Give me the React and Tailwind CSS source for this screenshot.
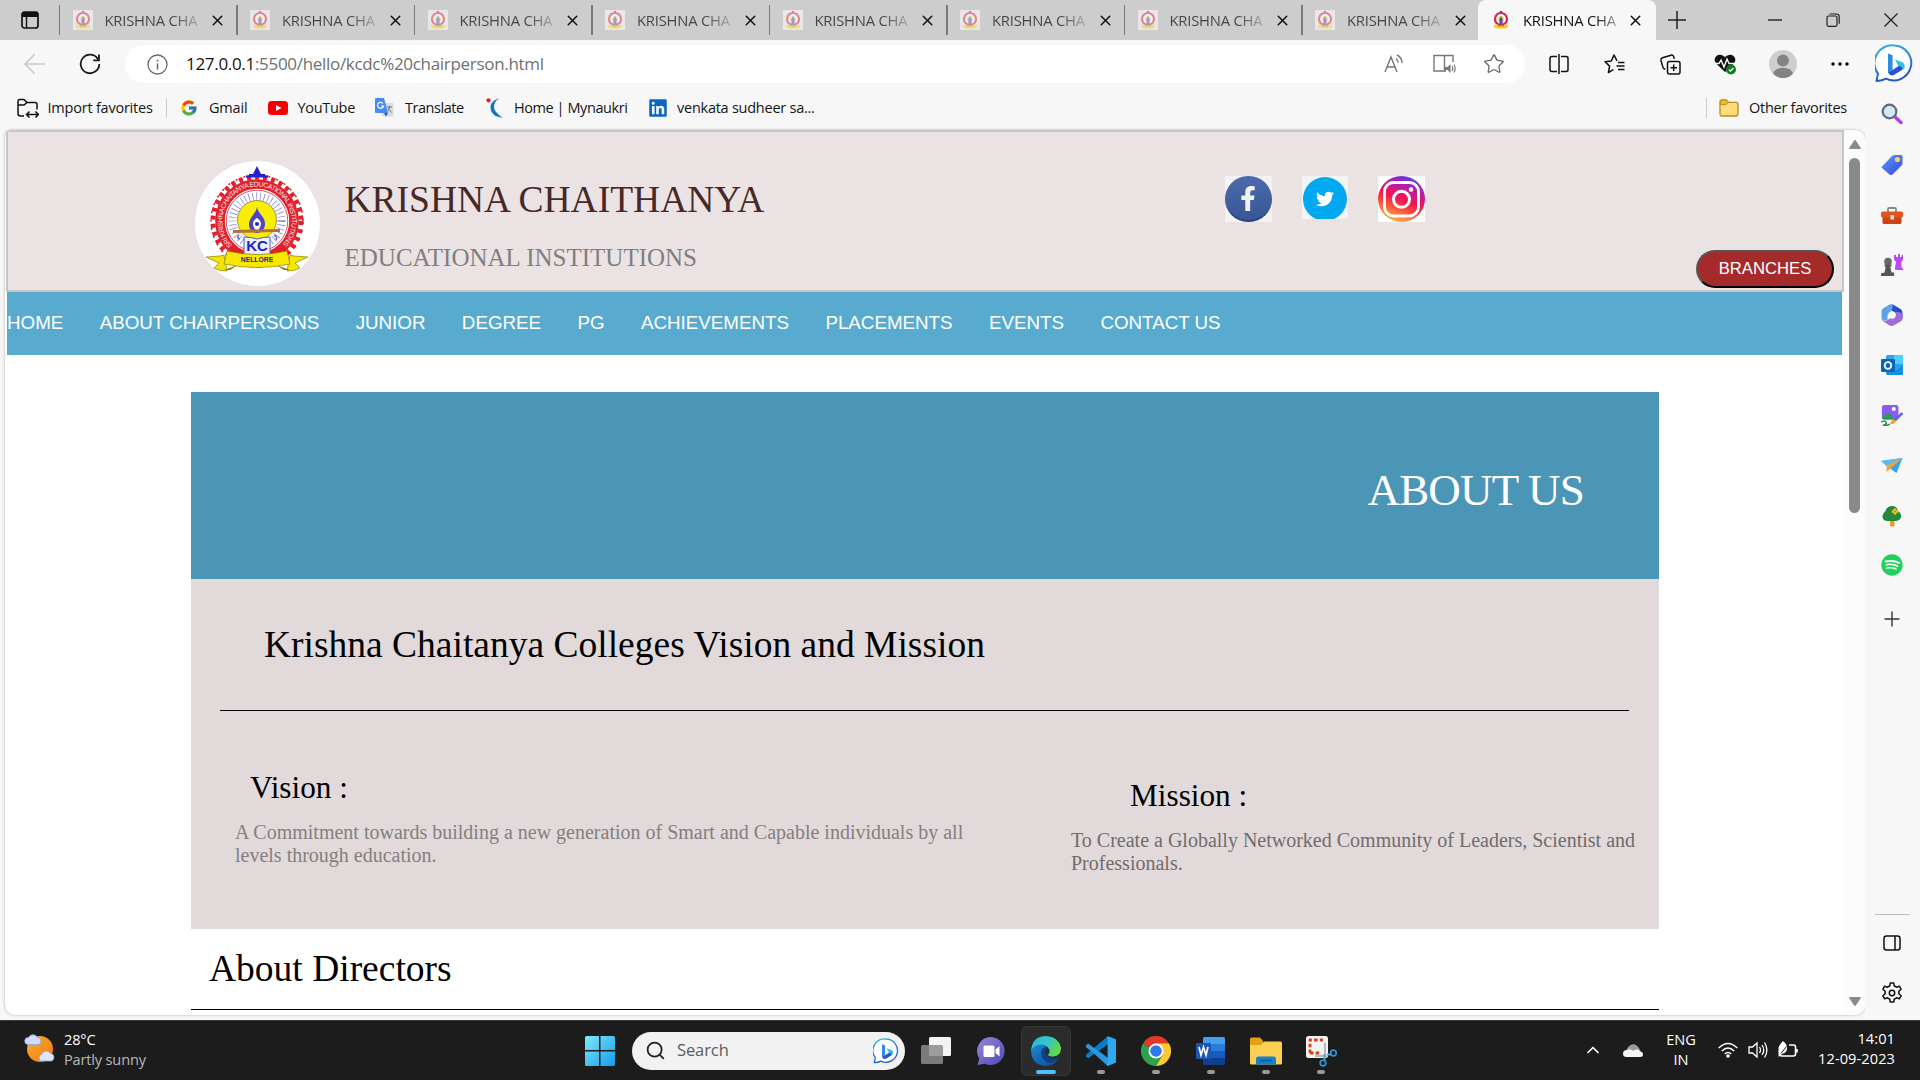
import React from "react";
import { Star, X, Search, ChevronUp } from "lucide-react";
import { FcGoogle } from "react-icons/fc";
import { FaTwitter, FaFacebookF, FaSpotify, FaLinkedin } from "react-icons/fa";

/* ---------- shared drawings ---------- */

function Crest({ className }) {
  return (
    <svg viewBox="0 0 125 125" className={className}>
      <circle cx="62.5" cy="62.5" r="62.5" fill="#fff" />
      <circle cx="62" cy="60" r="44" fill="none" stroke="#e0202c" strokeWidth="5" strokeDasharray="4 4.2" />
      <circle cx="62" cy="60" r="46" fill="none" stroke="#e0202c" strokeWidth="1.6" strokeDasharray="2 6.4" strokeDashoffset="-1" />
      <circle cx="62" cy="60" r="37" fill="none" stroke="#e0202c" strokeWidth="9.6" />
      <circle cx="62" cy="60" r="30.8" fill="#fff" stroke="#e0202c" strokeWidth="0.8" />
      <circle cx="62" cy="60" r="24.5" fill="none" stroke="#8c8ce0" strokeWidth="8" strokeDasharray="0.8 3" />
      <path d="M62 5l4 8h4v1.500h3v2H51v-2h3V13h4z" fill="#2a1fd0" />
      <circle cx="62" cy="59" r="19.5" fill="#f8ee00" stroke="#8a7a50" strokeWidth="0.8" />
      <path d="M62 46c1 7 9 10 8 18-1 6-5 8-8 8s-8-3-8-8c0-8 7-11 8-18z" fill="#4a45cc" />
      <path d="M62 57c3 2 4 4 4 6s-2 5-4 8c-2-3-4-5-4-8s1-4 4-6z" fill="#fff" />
      <circle cx="62" cy="63" r="2" fill="#2a1fd0" />
      <path d="M38 69l47-1v3l-47 1z" fill="#b5703c" />
      <path d="M44 74q-3 3 1 4M79 74q4 2 2 5" stroke="#6a6ad8" strokeWidth="1.5" fill="none" />
      <path d="M49 76q7 0 13 2q6-2 13-2v18H49z" fill="#eef0fa" stroke="#5560c0" strokeWidth="1" />
      <path id="crestArc" d="M37.200 84.200A34.600 34.600 0 1 1 86.800 84.200" fill="none" />
      <text fill="#ffe2e0" fontSize="6.8" fontFamily="Liberation Sans, sans-serif">
        <textPath href="#crestArc" textLength="160">SRI KRISHNACHAITANYA EDUCATIONAL INSTITUTIONS</textPath>
      </text>
      <text x="62" y="89.500" textAnchor="middle" fontSize="15" fontWeight="700" fill="#1a22c8" fontFamily="Liberation Sans, sans-serif">KC</text>
      <path d="M11 96l14-1 4-1 3 16q-8 0-13-3l5-5zM113 96l-14-1-4-1-3 16q8 0 13-3l-5-5z" fill="#f4e400" stroke="#8a8200" strokeWidth="0.7" />
      <path d="M29 109l14-5-8 5zM95 109l-14-5 8 5z" fill="#857c00" />
      <path d="M32 90q30 7 60 0l3 13q-33 7-66 0z" fill="#f8e800" stroke="#8a8200" strokeWidth="0.7" />
      <text x="62" y="100.500" textAnchor="middle" fontSize="6.8" fontWeight="700" fill="#26268a" fontFamily="Liberation Sans, sans-serif">NELLORE</text>
    </svg>
  );
}

function MiniCrest({ faded }) {
  return (
    <svg viewBox="0 0 20 20" className={faded ? "h-5 w-5 shrink-0 bg-[#e9e7e7]" : "h-5 w-5 shrink-0"}>
      <g opacity={faded ? 0.5 : 1}>
        <circle cx="10" cy="9" r="6" fill="#fff" stroke="#dc2440" strokeWidth="2.200" />
        <path d="M8.300 2.200L10 .5l1.700 1.700z" fill="#2a2ad0" />
        <circle cx="10" cy="9" r="2.900" fill="#f0d84c" />
        <path d="M10 6l1.600 3.200v5H8.400v-5z" fill="#4f4fc4" />
        <path d="M2.500 15.500l3-1q4.500 1 9 0l3 1-1.500 2.500q-6 1-12 0z" fill="#ead41a" />
        <path d="M7 15.800h6" stroke="#7a6a20" strokeWidth="0.900" />
      </g>
    </svg>
  );
}

function BingBubble({ className, id }) {
  return (
    <svg viewBox="0 0 38 39" className={className}>
      <defs>
        <linearGradient id={id} x1="0" y1="0" x2="0.3" y2="1">
          <stop offset="0" stopColor="#35b4e8" />
          <stop offset="1" stopColor="#2458c8" />
        </linearGradient>
      </defs>
      <path d="M19 1.5a17.5 17.5 0 1 1-8 33.2q-4 2.4-9.5 2.3l1.5-7.5A17.5 17.5 0 0 1 19 1.500z" fill="#fff" stroke={"url(#" + id + ")"} strokeWidth="2" strokeLinejoin="round" />
      <path d="M13 9.500l4.600 1.800v14.700l-4.600 3z" fill="#2b8be6" />
      <path d="M20 15.500l8 3q2.200 1.600 1.700 4.500-.3 1.800-1.700 3l-1-2.500-4-2z" fill="#2fc2e8" />
      <path d="M13 28.500l4.600-2.500 6.400-4.200q4 1 3.500 4l-8.700 5.300q-3.500 1.500-5.800-2.600z" fill="#2355d4" />
    </svg>
  );
}

/* ---------- browser chrome ---------- */

function InactiveTab() {
  return (
    <div className="flex h-10 w-[177.5px] shrink-0 items-center">
      <div className="h-[30px] w-[1.5px] bg-[#7a7a7a]" />
      <div className="ml-[12.5px] flex"><MiniCrest faded /></div>
      <div className="ml-3 w-[96px] overflow-hidden whitespace-nowrap bg-gradient-to-r from-[#444] from-70% to-[#b8b8b8] bg-clip-text text-[14.8px] tracking-[-0.22px] text-transparent">KRISHNA CHA</div>
      <X className="ml-[8.5px] h-[17px] w-[17px] text-[#111]" strokeWidth={2.1} />
    </div>
  );
}

function TabStrip() {
  return (
    <div className="flex h-10 items-center bg-[#cdcdcd]">
      <svg viewBox="0 0 18 18" className="ml-[21px] mr-[19.5px] h-[18px] w-[18px] shrink-0">
        <rect x="1" y="1" width="16" height="16" rx="2.5" fill="none" stroke="#111" strokeWidth="1.7" />
        <path d="M1 3q0-2 2-2h12q2 0 2 2v3H1z" fill="#111" />
        <path d="M5.500 5v12" stroke="#111" strokeWidth="1.4" />
      </svg>
      {[0, 1, 2, 3, 4, 5, 6, 7].map((i) => <InactiveTab key={i} />)}
      <div className="-ml-px flex h-10 w-[178px] shrink-0 items-center rounded-t-lg bg-[#f7f7f7]">
        <div className="ml-[13.5px] flex"><MiniCrest /></div>
        <div className="ml-3 w-[96px] overflow-hidden whitespace-nowrap bg-gradient-to-r from-[#111] from-75% to-[#bbb] bg-clip-text text-[14.8px] tracking-[-0.22px] text-transparent">KRISHNA CHA</div>
        <X className="ml-[8px] h-[17px] w-[17px] text-[#111]" strokeWidth={2.1} />
      </div>
      <svg viewBox="0 0 18 18" className="ml-[12px] h-[18px] w-[18px]"><path d="M9 0v18M0 9h18" stroke="#222" strokeWidth="1.5" /></svg>
      <div className="ml-auto mr-[22px] flex items-center">
        <svg viewBox="0 0 14 14" className="mr-px h-[14px] w-[14px]"><path d="M0 7h14" stroke="#222" strokeWidth="1.4" /></svg>
        <svg viewBox="0 0 14 14" className="ml-[43px] h-[14px] w-[14px]">
          <rect x="1" y="3" width="10" height="10.3" rx="1.5" fill="none" stroke="#222" strokeWidth="1.2" />
          <path d="M3.5 1h7q2.7 0 2.700 2.700v7" fill="none" stroke="#222" strokeWidth="1.2" />
        </svg>
        <svg viewBox="0 0 14 14" className="ml-11 h-[14px] w-[14px]"><path d="M.5.5l13 13M13.500.5l-13 13" stroke="#222" strokeWidth="1.3" /></svg>
      </div>
    </div>
  );
}

function Toolbar() {
  return (
    <div className="flex h-12 items-center">
      <svg viewBox="0 0 22 22" className="ml-6 h-[22px] w-[22px]"><path d="M21 11H1M10.500 1.500L1 11l9.500 9.500" fill="none" stroke="#c9c9c9" strokeWidth="1.6" /></svg>
      <svg viewBox="0 0 22 22" className="ml-[33px] h-[22px] w-[22px]">
        <path d="M19.200 6.500A9.300 9.300 0 1 0 20.300 11" fill="none" stroke="#1a1a1a" strokeWidth="1.8" />
        <path d="M20 1.500V7.300H14.200" fill="none" stroke="#1a1a1a" strokeWidth="1.8" />
      </svg>
      <div className="ml-6 flex h-[38px] w-[1400px] items-center rounded-full bg-white">
        <svg viewBox="0 0 21 21" className="ml-[22px] h-[21px] w-[21px]">
          <circle cx="10.500" cy="10.500" r="9.500" fill="none" stroke="#6b6b6b" strokeWidth="1.300" />
          <path d="M10.500 9.500v6M10.500 5.800v1.800" stroke="#6b6b6b" strokeWidth="1.500" />
        </svg>
        <div className="ml-[18px] w-[380px] whitespace-nowrap text-[17px] tracking-[-0.31px] text-[#707070]"><span className="text-[#111]">127.0.0.1</span>:5500/hello/kcdc%20chairperson.html</div>
        <svg viewBox="0 0 20 20" className="ml-auto h-5 w-5">
          <path d="M1 18L7 3l6 15M3 13h8M12 4.500q2 1.500 2 4M13 1q5 2.500 5 8" fill="none" stroke="#777" strokeWidth="1.400" />
        </svg>
        <svg viewBox="0 0 23 20" className="ml-[29px] h-5 w-[23px]">
          <path d="M20 8V1.500h-8.500V17H13M11.500 17H1V1.500h10.500" fill="none" stroke="#777" strokeWidth="1.400" />
          <path d="M12 13h2.500l3-3v9l-3-3H12z" fill="#777" />
          <path d="M19 12q1.500 2.500 0 5M21 10.500q2.300 4 0 8" fill="none" stroke="#777" strokeWidth="1.200" />
        </svg>
        <Star className="ml-[27px] mr-[20px] h-[22px] w-[22px] text-[#666]" strokeWidth={1.400} />
      </div>
      <svg viewBox="0 0 20 20" className="ml-6 h-5 w-5 text-[#111]">
        <path d="M8 2.500H3Q1 2.500 1 4.500v11q0 2 2 2h5M12 2.500h5q2 0 2 2v11q0 2-2 2h-5M10 0v20" fill="none" stroke="currentColor" strokeWidth="1.500" />
      </svg>
      <svg viewBox="0 0 21 20" className="ml-[35px] h-5 w-[21px]">
        <path d="M13 6.800L10 1 7.300 7 1 7.800l4.600 4.300-1.200 6.400 5-2.800M14 8.500h6.500M12.500 12h8M14 15.500h6.500" fill="none" stroke="#111" strokeWidth="1.500" strokeLinejoin="round" />
      </svg>
      <svg viewBox="0 0 21 21" className="ml-[35px] h-[21px] w-[21px]">
        <rect x="7.500" y="7.500" width="12.500" height="12.500" rx="2" fill="none" stroke="#111" strokeWidth="1.500" />
        <path d="M13.700 10.500v6.500M10.500 13.700H17M5.300 15.300Q3.500 15 2.900 13.300L1 6.500Q.5 4.500 2.500 3.800L11 1.200q2-.5 2.600 1.300l.7 2.400" fill="none" stroke="#111" strokeWidth="1.500" />
      </svg>
      <svg viewBox="0 0 22 22" className="ml-[33px] h-[22px] w-[22px]">
        <path d="M11 19L2 10.500Q-1 6 2.500 3T11 4q5-4 8.500-1t.5 7.500z" fill="#111" />
        <path d="M0 10.500h5l2-3.500 3 7 3-8 2 4.500h6" fill="none" stroke="#f7f7f7" strokeWidth="1.400" />
        <circle cx="17" cy="16.500" r="5" fill="#127d1e" />
        <path d="M14.800 16.600l1.600 1.600 3-3.200" fill="none" stroke="#fff" strokeWidth="1.200" />
      </svg>
      <svg viewBox="0 0 28 28" className="ml-[33px] h-7 w-7">
        <circle cx="14" cy="14" r="14" fill="#d0cecc" />
        <circle cx="14" cy="10.500" r="6" fill="#858381" />
        <path d="M4 23.800q2-6 10-6t10 6q-4 4.200-10 4.200T4 23.800z" fill="#858381" />
      </svg>
      <svg viewBox="0 0 18 4" className="ml-[34px] h-1 w-[18px]"><circle cx="2" cy="2" r="1.700" /><circle cx="9" cy="2" r="1.700" /><circle cx="16" cy="2" r="1.700" /></svg>
    </div>
  );
}

function Bookmarks() {
  const label = "whitespace-nowrap text-[14.5px] text-[#151515]";
  return (
    <div className="flex h-[42px] items-center pb-[3px]">
      <svg viewBox="0 0 22 20" className="ml-[17px] h-5 w-[22px]">
        <path d="M7 18H3.500Q1 18 1 15.500V3.500Q1 1.500 3 1.500h4l3 3h8q2 0 2 2v5M1 7h6l3-2.500" fill="none" stroke="#111" strokeWidth="1.500" />
        <path d="M10 16.500h11M12.500 13.500l-3 3 3 3M18.500 13.500l3 3-3 3" fill="none" stroke="#111" strokeWidth="1.500" />
      </svg>
      <div className={label + " ml-[8.5px] w-[118.5px] tracking-[-0.22px]"}>Import favorites</div>
      <div className="h-5 w-px bg-[#ccc]" />
      <FcGoogle className="ml-[13px] h-[18px] w-[18px]" />
      <div className={label + " ml-[11px] w-[59px] tracking-[-0.2px]"}>Gmail</div>
      <svg viewBox="0 0 20 14" className="h-[14px] w-5"><rect width="20" height="14" rx="3.500" fill="#f50000" /><path d="M8 4l5.500 3L8 10z" fill="#fff" /></svg>
      <div className={label + " ml-[9.5px] w-[77.5px] tracking-[-0.3px]"}>YouTube</div>
      <svg viewBox="0 0 19 19" className="h-[19px] w-[19px]">
        <rect x="7" y="5" width="11.500" height="13.500" rx="1" fill="#d8dbe0" />
        <path d="M1 0h8l4 15H1Q0 15 0 14V1q0-1 1-1z" fill="#4a8af4" />
        <path d="M9 15h4l-2 3.500z" fill="#2a56c6" />
        <path d="M8 5.500A3 3 0 1 0 8.500 8H6" fill="none" stroke="#fff" strokeWidth="1.200" />
        <path d="M12 9h5M14.500 8v1.500q-1 3-2.500 4M13 10.500l3.500 4" fill="none" stroke="#6b7380" strokeWidth="1" />
      </svg>
      <div className={label + " ml-[11px] w-[81px] tracking-[-0.45px]"}>Translate</div>
      <svg viewBox="0 0 18 20" className="h-5 w-[18px]">
        <circle cx="2.500" cy="2.300" r="2.100" fill="#e3202c" />
        <path d="M13 0Q5 3 4.500 8.500T9.500 18L17 20Q8 14 8 9T13 0z" fill="#1173c4" />
      </svg>
      <div className={label + " ml-[10px] w-[135px] tracking-[-0.43px]"}>Home | Mynaukri</div>
      <FaLinkedin className="h-5 w-[18px] text-[#0a66c2]" />
      <div className={label + " ml-[10px] w-[150px] tracking-[-0.25px]"}>venkata sudheer sa...</div>
      <div className="ml-auto h-5 w-px bg-[#ccc]" />
      <svg viewBox="0 0 20 18" className="ml-3 h-[18px] w-5">
        <path d="M1 3q0-2.200 2-2.200h4l2.500 2.500H17q2 0 2 2V15q0 2-2 2H3q-2 0-2-2z" fill="#fedc7c" stroke="#b58e1e" strokeWidth="1.300" />
        <path d="M1.300 5.500H7l2.500-2.200L7.200 1H3Q1.300 1 1.300 3z" fill="#efb92a" stroke="#b58e1e" strokeWidth="0.900" />
      </svg>
      <div className={label + " ml-[10px] w-[116px] tracking-[-0.26px]"}>Other favorites</div>
    </div>
  );
}

/* ---------- sidebar ---------- */

function Sidebar() {
  const ic = "h-[22px] w-[22px] shrink-0";
  return (
    <div className="flex w-[55px] flex-col items-center bg-[#f7f7f7]">
      <BingBubble id="bingTop" className="ml-0.5 mt-1 h-[39px] w-[38px] shrink-0" />
      <div className="mr-px mt-5 flex flex-col items-center gap-[28.2px]">
        <svg viewBox="0 0 22 22" className={ic}>
          <path d="M13.500 13.500l6.500 6" stroke="#b140ea" strokeWidth="3.500" strokeLinecap="round" />
          <circle cx="8.500" cy="8.500" r="6.800" fill="#cdeafc" stroke="#6b6b6b" strokeWidth="2.200" />
        </svg>
        <svg viewBox="0 -1 22 22" className={ic}>
          <defs><linearGradient id="tag" x1="0" y1="0" x2="1" y2="1"><stop offset="0" stopColor="#5a9bf8" /><stop offset="1" stopColor="#3a44e0" /></linearGradient></defs>
          <path d="M1 12.500L11 2q1-1 2.500-1H20q1.500 0 1.500 1.500V9q0 1.500-1 2.500L11.500 20.500q-1.500 1.200-3 0L1 14q-.7-.8 0-1.500z" fill="url(#tag)" />
          <circle cx="16.500" cy="5.500" r="2.600" fill="#ffd24a" />
        </svg>
        <svg viewBox="0 -2 22 22" className={ic}>
          <path d="M7 7V4q0-1 1-1h6q1 0 1 1v3" fill="none" stroke="#888" strokeWidth="1.800" />
          <rect x="1.500" y="9" width="19" height="10" rx="1.500" fill="#cc4415" />
          <rect x="0" y="6.500" width="22" height="6" rx="1.500" fill="#e0561c" />
          <rect x="9.500" y="10" width="3.500" height="4.500" rx=".6" fill="#ddd" />
        </svg>
        <svg viewBox="0 0 22 22" className={ic}>
          <path d="M13 1h2v2h2V0h2v3h1.500V1H22v5l-1.500 1.500V14H22v2h-8v-2l1-6.500L13 6z" fill="#bc4cf0" />
          <circle cx="7" cy="7.500" r="3.800" fill="#686868" />
          <path d="M3.500 10.500h7v2H9.300l1.200 6H13V22H0v-2.500l3.500-1 1.200-6H3.500z" fill="#555" />
        </svg>
        <svg viewBox="0 0 22 22" className={ic}>
          <defs><linearGradient id="copa" x1="0" y1="0" x2="1" y2="1"><stop offset="0" stopColor="#2a5bd8" /><stop offset="1" stopColor="#1d3fa8" /></linearGradient></defs>
          <path d="M7 1.500Q9 0 12 .6L19.500 5q2 1.300 2 4v6q-1-2-3-3.200L11 7z" fill="url(#copa)" />
          <path d="M7 1.500L12 .6 10 9l-3.500 2v5L2 17q-1.500-1-1.500-3V7.500Q.5 5.500 2 4.500z" fill="#5ba6ea" />
          <path d="M21.500 9v5.500q0 2-2 3L12.500 21.500q-2 .8-4 0L2 17q2 .3 4-.8l8.500-5V7.500z" fill="#a06ad8" />
          <circle cx="11" cy="11" r="3.800" fill="#f7f7f7" />
        </svg>
        <svg viewBox="0 0 22 22" className={ic}>
          <rect x="5" y="1" width="17" height="20" rx="1.500" fill="#28a8ea" />
          <path d="M13 1h9v9h-9z" fill="#50d0f8" />
          <path d="M5 12l9 5 8-6v9q0 1-1 1H6z" fill="#1490df" />
          <rect x="0" y="5" width="14" height="13" rx="1.200" fill="#0a64b8" />
          <circle cx="7" cy="11.500" r="3.300" fill="none" stroke="#fff" strokeWidth="1.800" />
        </svg>
        <svg viewBox="0 -1 24 24" className={ic}>
          <rect x="1" y="0" width="18" height="16" rx="2.500" fill="#8c5cf0" />
          <circle cx="14" cy="4.500" r="2.200" fill="#fff" />
          <path d="M1 14L7 9q1.500-1 3 .5l5 6.500H3.500Q1 16 1 14z" fill="#2a9a5a" />
          <path d="M0 18.500q4-1.500 5.500 0T3 22q3 1 6.500-1" fill="none" stroke="#1a8a4a" strokeWidth="1.500" />
          <path d="M14 15.500l7.500-7q1.800-.8 2.300.8v1L16 18z" fill="#5a64f0" />
          <path d="M10 21q1-4.500 4-5.500l2 2.500q-1 3-6 3z" fill="#f2a020" />
        </svg>
        <svg viewBox="0 -1 22 22" className={ic}>
          <path d="M0 6L21.500 3 15.500 18l-5-3.500z" fill="#39a0ea" />
          <path d="M0 6L21.500 3 5.500 11z" fill="#57bdf5" />
          <path d="M21.500 3L5.500 10.500V17l4-3.500z" fill="#f2a43a" />
        </svg>
        <svg viewBox="0 0 22 22" className={ic}>
          <path d="M9 14h4.500v7q-2.200 1.200-4.500 0z" fill="#ef9822" />
          <path d="M11 1q5 0 6 5 4 2.500 3 6-1 4-5.500 4h-8Q2 16 1.500 12 1 8.500 4.500 6 6 1 11 1z" fill="#258a3c" />
          <path d="M14 3.500v6M11 6.500h6" stroke="#f8c828" strokeWidth="2.600" />
          <circle cx="14" cy="6.500" r="1.100" fill="#d97a10" />
        </svg>
        <FaSpotify className={ic + " -mt-px text-[#22d05e]"} />
        <svg viewBox="0 0 22 22" className={ic + " mt-1"}><path d="M11 3.500v15M3.500 11h15" stroke="#333" strokeWidth="1.400" /></svg>
      </div>
      <div className="mt-auto h-px w-[35px] bg-[#bdbdbd]" />
      <svg viewBox="0 0 18 16" className="mr-px mt-5 h-4 w-[18px]"><rect x="1" y="1" width="16" height="14" rx="2.500" fill="none" stroke="#111" strokeWidth="1.500" /><path d="M12 1v14" stroke="#111" strokeWidth="1.500" /></svg>
      <svg viewBox="0 0 22 22" className="mb-4 mr-px mt-[31px] h-[22px] w-[22px]">
        <path d="M9.300 1h3.400l.6 3q1.200.5 2.200 1.200l2.900-1 1.700 3-2.300 2q.2 1.300 0 2.600l2.300 2-1.700 3-2.900-1q-1 .8-2.200 1.200l-.6 3H9.300l-.6-3q-1.200-.4-2.200-1.200l-2.900 1-1.700-3 2.300-2q-.2-1.300 0-2.600l-2.300-2 1.700-3 2.900 1q1-.8 2.200-1.200z" fill="none" stroke="#111" strokeWidth="1.500" strokeLinejoin="round" />
        <circle cx="11" cy="11" r="2.700" fill="none" stroke="#111" strokeWidth="1.500" />
      </svg>
    </div>
  );
}

/* ---------- web page ---------- */

function SiteHeader() {
  return (
    <header className="flex h-[162px] items-start border-2 border-[#c9c5c5] bg-[#ebe3e3]">
      <Crest className="ml-[187px] mt-[29px] h-[125px] w-[125px]" />
      <div className="ml-[24.5px] mt-12 w-[880px]">
        <h1 className="text-[37.5px] leading-10 text-[#472826]">KRISHNA CHAITHANYA</h1>
        <h2 className="mt-6 text-[25px] leading-7 text-[#807e7e]">EDUCATIONAL INSTITUTIONS</h2>
      </div>
      <div className="mt-11 flex items-start">
        <div className="flex h-[46px] w-[47px] items-center justify-center bg-[#f3f3f3]">
          <div className="flex h-[46px] w-[47px] items-center justify-center rounded-full border-b-2 border-[#26427c] bg-gradient-to-b from-[#4c6bac] to-[#395696]">
            <FaFacebookF className="h-[25px] w-[22px] text-[#f2f2f2]" />
          </div>
        </div>
        <div className="ml-[30px] flex h-[43px] w-[46px] items-center justify-center overflow-hidden bg-[#f3f3f3]">
          <div className="mt-[3px] flex h-[44px] w-[44px] shrink-0 items-center justify-center rounded-full bg-[#03a9f0]">
            <FaTwitter className="h-[18px] w-[18px] text-white" />
          </div>
        </div>
        <div className="ml-[30px] h-[46px] w-[47px] bg-white">
          <svg viewBox="0 0 47 46" className="h-full w-full">
            <defs>
              <linearGradient id="ig" x1="0.25" y1="1" x2="0.65" y2="0">
                <stop offset="0" stopColor="#ffc24a" /><stop offset=".25" stopColor="#fb6a3c" /><stop offset=".5" stopColor="#f5154c" /><stop offset=".78" stopColor="#b81ba8" /><stop offset="1" stopColor="#5a3ee0" />
              </linearGradient>
            </defs>
            <ellipse cx="23.500" cy="23" rx="23.500" ry="23" fill="url(#ig)" />
            <rect x="6.500" y="6.500" width="34" height="33.500" rx="9" fill="none" stroke="#fff" strokeWidth="2.800" />
            <circle cx="23.500" cy="23.300" r="8" fill="none" stroke="#fff" strokeWidth="3" />
            <circle cx="33" cy="13.500" r="2.300" fill="#fff" />
          </svg>
        </div>
      </div>
      <button className="ml-auto mr-2 mt-[118px] h-[38px] w-[138px] rounded-[19px] border-2 border-b-black border-l-[#555] border-r-black border-t-[#555] bg-[#a52a2a] pb-0.5 font-['Liberation_Sans',sans-serif] text-[16.67px] text-white">BRANCHES</button>
    </header>
  );
}

function SiteNav() {
  const items = ["HOME", "ABOUT CHAIRPERSONS", "JUNIOR", "DEGREE", "PG", "ACHIEVEMENTS", "PLACEMENTS", "EVENTS", "CONTACT US"];
  return (
    <nav className="mx-px flex h-[63px] w-[1835px] items-center gap-[36.45px] bg-[#58abcf] font-['Liberation_Sans',sans-serif] text-[18.75px] text-white">
      {items.map((t) => <span key={t}>{t}</span>)}
    </nav>
  );
}

function WebPage() {
  return (
    <div className="ml-[5px] flex h-[885px] w-[1860px] overflow-hidden rounded-[10px] rounded-tl-[6px] bg-white shadow-[0_0_3px_rgba(0,0,0,0.3)]">
      <div className="ml-px w-[1838px] font-['Liberation_Serif',serif]">
        <SiteHeader />
        <SiteNav />
        <main className="ml-[185px] mt-[37px] w-[1468px]">
          <section className="flex h-[187px] items-center justify-end bg-[#4b96b6] pr-[75px] pt-[9px] text-[45px] leading-[50px] tracking-[-0.8px] text-white">ABOUT US</section>
          <section className="h-[350px] bg-[#e2dada] px-[29px] pt-[46px]">
            <h2 className="ml-11 text-[37.5px] leading-10 text-black">Krishna Chaitanya Colleges Vision and Mission</h2>
            <div className="mr-px mt-[45px] h-px bg-black" />
            <div className="flex">
              <div className="ml-[15px] mt-[59px] w-[836px] shrink-0">
                <h3 className="ml-[15px] text-[31.25px] leading-9 text-black">Vision :</h3>
                <p className="mt-[15px] w-[740px] text-[20px] leading-[23px] text-[#837f7f]">A Commitment towards building a new generation of Smart and Capable individuals by all levels through education.</p>
              </div>
              <div className="mt-[67px] w-[575px] shrink-0">
                <h3 className="ml-[59px] text-[31.25px] leading-9 text-black">Mission :</h3>
                <p className="mt-[15px] text-[20px] leading-[23px] text-[#706c6c]">To Create a Globally Networked Community of Leaders, Scientist and Professionals.</p>
              </div>
            </div>
          </section>
          <h2 className="ml-[18px] mt-[20px] text-[37.5px] leading-10 text-black">About Directors</h2>
          <div className="mt-5 h-px bg-black" />
        </main>
      </div>
      <div className="flex w-[21px] flex-col items-center bg-[#fcfcfc]">
        <svg viewBox="0 0 12 9" className="mt-[10px] h-[9px] w-3"><path d="M6 0q.6 0 1 .7l4.800 7.300q.3 1-.8 1H1Q-.1 9 .2 8L5 .7Q5.400 0 6 0z" fill="#8a8a8a" /></svg>
        <div className="mt-[9px] h-[355px] w-[11px] rounded-full bg-[#8a8a8a]" />
        <svg viewBox="0 0 12 9" className="mb-[9px] mt-auto h-[9px] w-3"><path d="M6 9q-.6 0-1-.7L.2 1Q-.1 0 1 0h10q1.100 0 .8 1L7 8.300Q6.600 9 6 9z" fill="#8a8a8a" /></svg>
      </div>
    </div>
  );
}

/* ---------- taskbar ---------- */

function AppSlot({ children, active, running }) {
  return (
    <div className={active ? "flex h-[50px] w-[50px] flex-col items-center rounded-md border border-[#363636] bg-[#2b2b2b]" : "flex h-[50px] w-[50px] flex-col items-center"}>
      <div className={active ? "mt-2 flex h-8 w-8 items-center justify-center" : "mt-[9px] flex h-8 w-8 items-center justify-center"}>{children}</div>
      {active && <div className="mt-[3px] h-1 w-5 rounded-full bg-[#4cc2ff]" />}
      {running && <div className="mt-[3px] h-1 w-2 rounded-full bg-[#9a9a9a]" />}
    </div>
  );
}

function Taskbar() {
  return (
    <div className="flex h-[60px] items-center border-t border-[#3a3a3a] bg-[#1c1c1c]">
      <svg viewBox="0 0 32 32" className="-mt-[5px] ml-6 h-8 w-8">
        <defs><linearGradient id="sun" x1="0" y1="0" x2="1" y2="1"><stop offset="0" stopColor="#f7b32c" /><stop offset="1" stopColor="#f07418" /></linearGradient></defs>
        <circle cx="16" cy="17" r="13" fill="url(#sun)" />
        <path d="M4 12.500a3.500 3.500 0 0 1 .5-7 5 5 0 0 1 9 0 3.600 3.600 0 0 1 1 7z" fill="#cfdcfb" stroke="#8da6e0" strokeWidth=".8" />
        <path d="M17 29a3.500 3.500 0 0 1 .5-6.500 5 5 0 0 1 9-1 3.900 3.900 0 0 1 1 7.500z" fill="#dbe5fd" stroke="#8da6e0" strokeWidth=".8" />
      </svg>
      <div className="-mt-1 ml-2 w-[516px] text-[14.6px] leading-5 tracking-[-0.18px] text-white">
        <div>28°C</div>
        <div className="text-[#b9b9b9]">Partly sunny</div>
      </div>
      <svg viewBox="0 0 30 30" className="ml-[4.5px] h-[30px] w-[30px]">
        <defs><linearGradient id="win" x1="0" y1="0" x2="1" y2="1"><stop offset="0" stopColor="#7fe9fb" /><stop offset="1" stopColor="#149bea" /></linearGradient></defs>
        <path d="M1.500 0H14v14H0V1.500Q0 0 1.500 0zM15.500 0h13Q30 0 30 1.500V14H15.500zM0 15.500h14V30H1.500Q0 30 0 28.500zM15.500 15.500H30v13q0 1.500-1.500 1.500h-13z" fill="url(#win)" />
      </svg>
      <div className="ml-[17.5px] flex h-[38px] w-[273px] items-center rounded-full bg-[#f2f2f2]">
        <Search className="ml-[13px] h-[21px] w-[21px] text-[#222]" strokeWidth={2} />
        <div className="ml-[11px] text-[16.5px] tracking-[-0.1px] text-[#5c5c5c]">Search</div>
        <BingBubble id="bingBar" className="ml-auto mr-[6px] h-[26px] w-[26px]" />
      </div>
      <div className="ml-[6px] flex items-center gap-[5px]">
        <AppSlot>
          <svg viewBox="0 0 30 28" className="h-7 w-[30px]"><rect x="8" y="0" width="22" height="19" rx="1.500" fill="#f3f3f3" /><rect x="0" y="8" width="22" height="19" rx="1.500" fill="#8c8c8c" fillOpacity=".85" /></svg>
        </AppSlot>
        <AppSlot>
          <svg viewBox="0 0 30 30" className="h-[30px] w-[30px]">
            <defs><linearGradient id="chat" x1="0" y1="0" x2="1" y2="1"><stop offset="0" stopColor="#9a86d8" /><stop offset="1" stopColor="#4a48b8" /></linearGradient></defs>
            <path d="M15 1a14 14 0 1 1-6 26.800L1.500 29l1.800-6.500A14 14 0 0 1 15 1z" fill="url(#chat)" />
            <rect x="7.500" y="9.500" width="11" height="11.500" rx="1.500" fill="#fff" /><path d="M19.500 13.500l4-3.500v10.500l-4-3.500z" fill="#fff" />
          </svg>
        </AppSlot>
        <AppSlot active>
          <svg viewBox="0 0 30 30" className="h-[30px] w-[30px]">
            <defs>
              <linearGradient id="e1" x1="0" y1="0" x2="1" y2="0.4"><stop offset="0" stopColor="#2cb4e8" /><stop offset=".6" stopColor="#35c8c0" /><stop offset="1" stopColor="#62d948" /></linearGradient>
              <linearGradient id="e2" x1="0" y1="0" x2="0.6" y2="1"><stop offset="0" stopColor="#1a88d0" /><stop offset="1" stopColor="#0f58a8" /></linearGradient>
            </defs>
            <path d="M0 15Q1 0 15.500 0 27 .5 30 11.500q.3 8-7.500 9-5 .3-5.500-2 2.500-2 1-5.500-2-3.500-7-4Q4 9 0 15z" fill="url(#e1)" />
            <path d="M0 15q3-6 10-6.500 5 0 7 2.500-5-.5-6.500 4-1 6 4 10t12.500-1.500Q23 30 14.500 30 1 29 0 15z" fill="url(#e2)" />
            <path d="M10.500 15q1-4 6-3.500-3 3-1 6.500 2.500 4.500 8 4.500l4-1.500q1 .8 0 2Q23 27 17 26.500 10 23 10.500 15z" fill="#123f84" />
          </svg>
        </AppSlot>
        <AppSlot running>
          <svg viewBox="0 0 30 30" className="h-[30px] w-[30px]">
            <path d="M21.500 0L30 3.500v23L21.500 30 8.500 17.800 2.500 22.300 0 21v-2.200L22 0z" fill="#0a7bc4" />
            <path d="M0 9l2.500-1.300L22 22.500V30L8 17.500 0 11.200z" fill="#2b97dc" />
            <path d="M21.500 0L30 3.500v23L21.500 30z" fill="#30a8f0" />
            <path d="M21.500 8.500v13L13 15z" fill="#1c1c1c" />
          </svg>
        </AppSlot>
        <AppSlot running>
          <svg viewBox="0 0 30 30" className="h-[30px] w-[30px]">
            <path d="M15 15L2 7.500a15 15 0 0 1 26 0z" fill="#e0392c" />
            <path d="M15 15L2 7.500A15 15 0 0 0 15 30l6.500-11z" fill="#2fa14e" />
            <path d="M15 15V7.500h13a15 15 0 0 1-13 22.500l6.500-11z" fill="#fcc930" />
            <circle cx="15" cy="15" r="7.500" fill="#fff" /><circle cx="15" cy="15" r="5.800" fill="#2f78ea" />
          </svg>
        </AppSlot>
        <AppSlot running>
          <svg viewBox="0 0 30 30" className="h-[30px] w-[30px]">
            <path d="M8.500 1H27.500Q29 1 29 2.500V8H7V2.500Q7 1 8.500 1z" fill="#44a0ee" />
            <path d="M7 8h22v7H7z" fill="#2b7cd6" /><path d="M7 15h22v7H7z" fill="#185abd" /><path d="M7 22h22v5.500q0 1.500-1.500 1.500h-19Q7 29 7 27.500z" fill="#103f91" />
            <rect x="0" y="7" width="15" height="16" rx="1.500" fill="#1c55b4" />
            <path d="M3 11l2 8 2.500-8L10 19l2-8" fill="none" stroke="#fff" strokeWidth="1.700" />
          </svg>
        </AppSlot>
        <AppSlot running>
          <svg viewBox="0 0 32 28" className="h-7 w-8">
            <path d="M0 2Q0 .5 1.500.5H10l3 3.500v6H0z" fill="#e2a112" />
            <path d="M0 8h11l3-3.500h16.500Q32 4.500 32 6v20q0 1.500-1.500 1.500h-29Q0 27.500 0 26z" fill="#fbcf52" />
            <path d="M6 27.500V22q0-2.500 2.500-2.500h15Q26 19.500 26 22v5.500z" fill="#1580d0" /><path d="M10 23.500h12" stroke="#0c5aa0" strokeWidth="1.600" />
          </svg>
        </AppSlot>
        <AppSlot running>
          <svg viewBox="0 0 32 32" className="h-8 w-8">
            <rect x="1" y="1" width="22" height="22" rx="2.500" fill="#f3f3f3" />
            <path d="M5 18V5h13" fill="none" stroke="#d2401c" strokeWidth="2.800" strokeDasharray="3.500 2.200" />
            <path d="M5 18h9" fill="none" stroke="#d2401c" strokeWidth="2.800" strokeDasharray="3.500 2.200" />
            <path d="M20 8v13M10 21h12" stroke="#b8b8b8" strokeWidth="2" />
            <path d="M19.500 19v6M22 19.500h5" stroke="#48a8e0" strokeWidth="2" />
            <circle cx="18" cy="28" r="2.800" fill="none" stroke="#2f8fd0" strokeWidth="1.800" /><circle cx="28.500" cy="18" r="2.800" fill="none" stroke="#2f8fd0" strokeWidth="1.800" />
          </svg>
        </AppSlot>
      </div>
      <div className="ml-auto mr-[25px] flex items-center pb-0.5 text-[14.6px] leading-5 text-white">
        <ChevronUp className="h-5 w-5" strokeWidth={2} />
        <svg viewBox="0 0 20 14" className="ml-5 h-[14px] w-5">
          <path d="M3 9Q4 4 7 2.500 12-1 16 5L18 9z" fill="#9a9a9a" /><path d="M3.500 14Q0 14 0 10.500T4 7q3-2 6 .8l3-1.300q3-.5 4 2 3 .3 3 3Q20 14 17 14z" fill="#f5f5f5" />
        </svg>
        <div className="-mt-0.5 ml-[20px] w-9 text-center">ENG<br />IN</div>
        <svg viewBox="0 0 20 16" className="ml-[19px] h-4 w-5">
          <path d="M.7 6q9.300-9 18.600 0M3.800 9q6.200-6 12.400 0M6.700 12q3.300-3 6.600 0" fill="none" stroke="#fff" strokeWidth="1.400" /><circle cx="10" cy="14" r="1.800" fill="#fff" />
        </svg>
        <svg viewBox="0 0 20 18" className="ml-[10px] h-[18px] w-5">
          <path d="M1 6h3.500L9 2v14l-4.500-4H1z" fill="none" stroke="#fff" strokeWidth="1.300" /><path d="M11.500 6q2 3 0 6M14 4q3.500 5 0 10M16.500 1.500q4.800 7.500 0 15" fill="none" stroke="#fff" strokeWidth="1.300" />
        </svg>
        <svg viewBox="0 0 20 18" className="ml-[10px] h-[18px] w-5">
          <path d="M11 4h4.500Q17.500 4 17.500 6v7q0 2-2 2H4q-2 0-2.500-2M19 8v3.500" fill="none" stroke="#fff" strokeWidth="1.600" /><path d="M5 0q5 4 4 8.500Q8 12 4 13L.5 16V7Q1 4 5 0z" fill="#fff" /><path d="M8.500 5.500L3 12.500" stroke="#1c1c1c" strokeWidth="1" />
        </svg>
        <div className="-mt-[3px] ml-[14px] w-[83px] whitespace-nowrap text-right tracking-[0.08px]">14:01<br />12-09-2023</div>
      </div>
    </div>
  );
}

export default function App() {
  return (
    <div className="flex h-[1080px] w-[1920px] flex-col overflow-hidden bg-[#f7f7f7] font-['Open_Sans','Noto_Sans',sans-serif]">
      <TabStrip />
      <div className="flex h-[980px]">
        <div className="w-[1865px]">
          <Toolbar />
          <Bookmarks />
          <WebPage />
        </div>
        <Sidebar />
      </div>
      <Taskbar />
    </div>
  );
}
